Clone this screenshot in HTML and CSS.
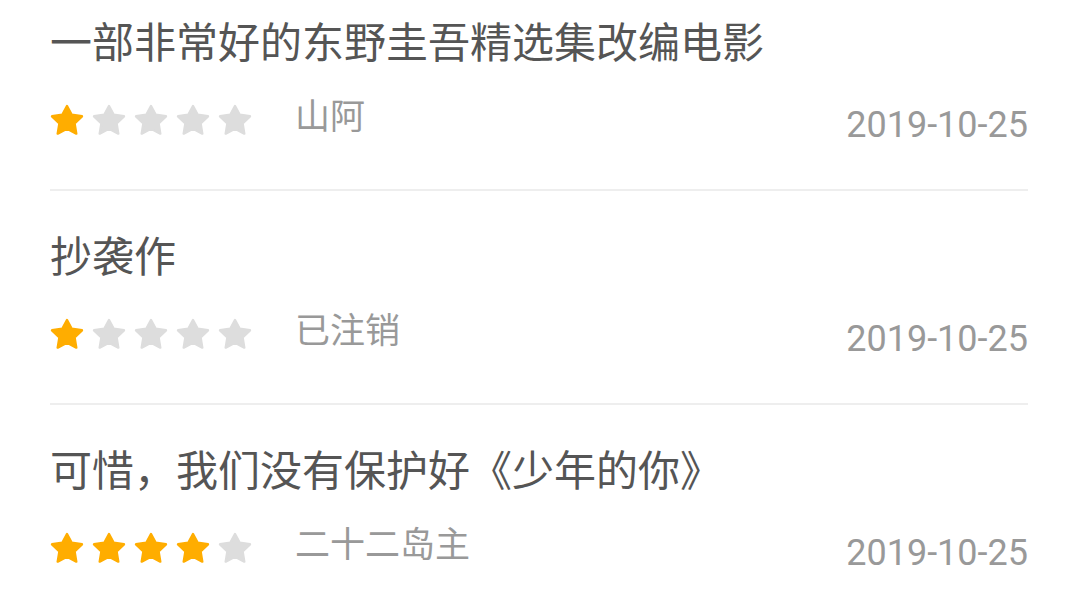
FILE: index.html
```html
<!DOCTYPE html>
<html lang="zh-CN">
<head>
    <meta charset="UTF-8">
    <meta name="viewport" content="width=device-width, initial-scale=1.0">
    <title>短评</title>
    <link rel="stylesheet" href="styles.css">
</head>
<body>
    <svg width="0" height="0" class="defs">
        <symbol id="star" viewBox="0 0 34 34">
            <path d="M17 3L21.7 11.8 32 13.3 24.6 20.5 26.3 30.6 17 25.8 7.7 30.6 9.4 20.5 2 13.3 12.3 11.8z"/>
        </symbol>
    </svg>

    <div class="list">
        <div class="review">
            <div class="review-title">一部非常好的东野圭吾精选集改编电影</div>
            <div class="review-meta">
                <div class="stars">
                    <svg class="star on"><use href="#star"/></svg>
                    <svg class="star"><use href="#star"/></svg>
                    <svg class="star"><use href="#star"/></svg>
                    <svg class="star"><use href="#star"/></svg>
                    <svg class="star"><use href="#star"/></svg>
                </div>
                <span class="user">山阿</span>
                <span class="date">2019-10-25</span>
            </div>
        </div>

        <div class="review">
            <div class="review-title">抄袭作</div>
            <div class="review-meta">
                <div class="stars">
                    <svg class="star on"><use href="#star"/></svg>
                    <svg class="star"><use href="#star"/></svg>
                    <svg class="star"><use href="#star"/></svg>
                    <svg class="star"><use href="#star"/></svg>
                    <svg class="star"><use href="#star"/></svg>
                </div>
                <span class="user">已注销</span>
                <span class="date">2019-10-25</span>
            </div>
        </div>

        <div class="review">
            <div class="review-title">可惜，我们没有保护好《少年的你》</div>
            <div class="review-meta">
                <div class="stars">
                    <svg class="star on"><use href="#star"/></svg>
                    <svg class="star on"><use href="#star"/></svg>
                    <svg class="star on"><use href="#star"/></svg>
                    <svg class="star on"><use href="#star"/></svg>
                    <svg class="star"><use href="#star"/></svg>
                </div>
                <span class="user">二十二岛主</span>
                <span class="date">2019-10-25</span>
            </div>
        </div>
    </div>
</body>
</html>
```

FILE: styles.css
```css
html,
body {
    margin: 0;
    padding: 0;
    background-color: #ffffff;
    overflow: hidden;
}

body {
    font-family: "Noto Sans CJK SC", "Noto Sans", sans-serif;
}

.defs {
    position: absolute;
}

.list {
    margin-top: -23px; /* page is scrolled a bit */
    padding: 0 51px 0 50px;
}

.review {
    padding: 40px 0 44px;
    border-bottom: 2px solid #eeeeee;
}

.review-title {
    font-size: 42px;
    line-height: 46px;
    color: #555555;
    white-space: nowrap;
}

.review-meta {
    display: flex;
    align-items: center;
    height: 50px;
    margin-top: 32px;
}

.stars {
    display: flex;
    gap: 8px;
}

.star {
    width: 34px;
    height: 34px;
    fill: #dddddd;
    stroke: #dddddd;
    stroke-width: 2.4;
    stroke-linejoin: round;
}

.star.on {
    fill: #ffad00;
    stroke: #ffad00;
}

.user {
    margin-left: 43px;
    font-size: 35px;
    line-height: 40px;
    color: #999999;
    padding-bottom: 13px;
}

.date {
    margin-left: auto;
    font-family: Roboto, "Noto Sans", sans-serif;
    font-size: 36px;
    line-height: 40px;
    color: #999999;
    padding-top: 9px;
}
```
